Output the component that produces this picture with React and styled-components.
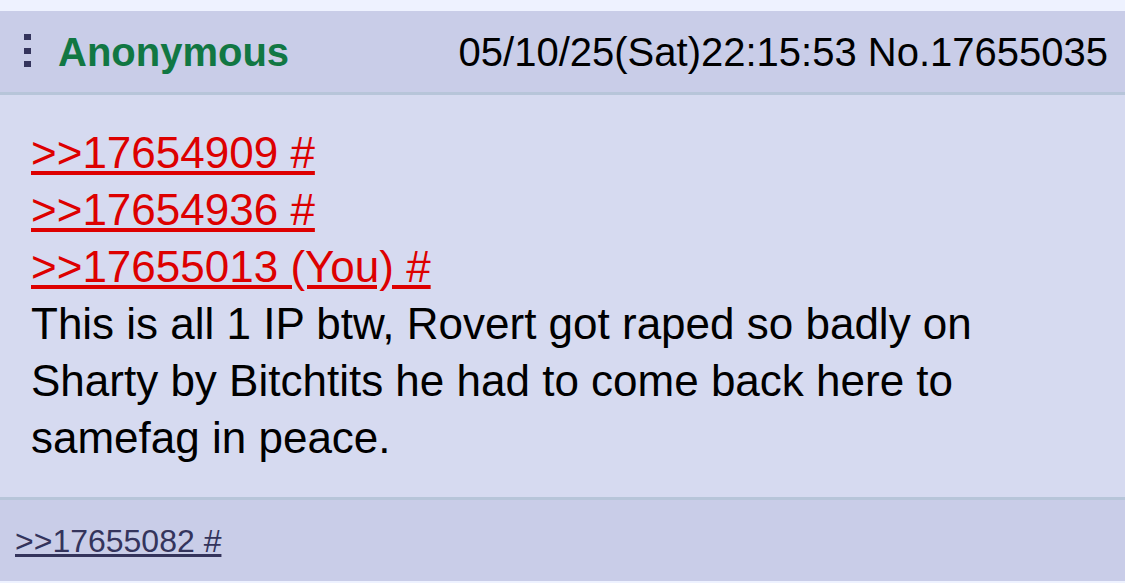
import styled, { createGlobalStyle } from "styled-components";

const GlobalStyle = createGlobalStyle`
  html, body {
    margin: 0;
    padding: 0;
    background: #eef2ff;
    font-family: "Liberation Sans", Arial, Helvetica, sans-serif;
  }
`;

const Page = styled.div`
  width: 1125px;
  height: 583px;
  padding-top: 11px;
  box-sizing: border-box;
  background: #eef2ff;
  overflow: hidden;
`;

const Post = styled.div`
  display: flex;
  flex-direction: column;
`;

const Header = styled.div`
  height: 81px;
  background: #c9cde8;
  border-bottom: 3px solid #b7c5d9;
  display: flex;
  align-items: center;
  justify-content: space-between;
  padding: 0 17px 0 21px;
`;

const NameBlock = styled.div`
  display: flex;
  align-items: center;
  gap: 24px;
`;

const Menu = styled.svg`
  width: 13px;
  height: 40px;
  display: block;
`;

const Name = styled.span`
  font-size: 40px;
  line-height: 40px;
  font-weight: bold;
  color: #117743;
`;

const DateLine = styled.span`
  font-size: 40px;
  line-height: 40px;
  color: #000;
`;

const Body = styled.div`
  background: #d6daf0;
  border-bottom: 3px solid #b7c5d9;
  padding: 29px 40px 31px 31px;
  font-size: 44px;
  line-height: 57px;
  color: #000;
`;

const Quote = styled.a`
  display: block;
  color: #dd0000;
  text-decoration: underline;
  width: fit-content;
`;

const Footer = styled.div`
  height: 81px;
  background: #c9cde8;
  display: flex;
  align-items: center;
  padding-left: 15px;
`;

const Backlink = styled.a`
  font-size: 32px;
  line-height: 32px;
  color: #34345c;
  text-decoration: underline;
`;

function KebabIcon() {
  return (
    <Menu viewBox="0 0 13 40">
      <rect x="3" y="2" width="7" height="6" fill="#34345c" />
      <rect x="3" y="16" width="7" height="6" fill="#34345c" />
      <rect x="3" y="29" width="7" height="6" fill="#34345c" />
    </Menu>
  );
}

export default function App() {
  const quotes = [">>17654909 #", ">>17654936 #", ">>17655013 (You) #"];

  return (
    <Page>
      <GlobalStyle />
      <Post>
        <Header>
          <NameBlock>
            <KebabIcon />
            <Name>Anonymous</Name>
          </NameBlock>
          <DateLine>05/10/25(Sat)22:15:53 No.17655035</DateLine>
        </Header>
        <Body>
          {quotes.map((q) => (
            <Quote key={q} href="#">
              {q}
            </Quote>
          ))}
          This is all 1 IP btw, Rovert got raped so badly on Sharty by
          Bitchtits he had to come back here to samefag in peace.
        </Body>
        <Footer>
          <Backlink href="#">&gt;&gt;17655082 #</Backlink>
        </Footer>
      </Post>
    </Page>
  );
}
